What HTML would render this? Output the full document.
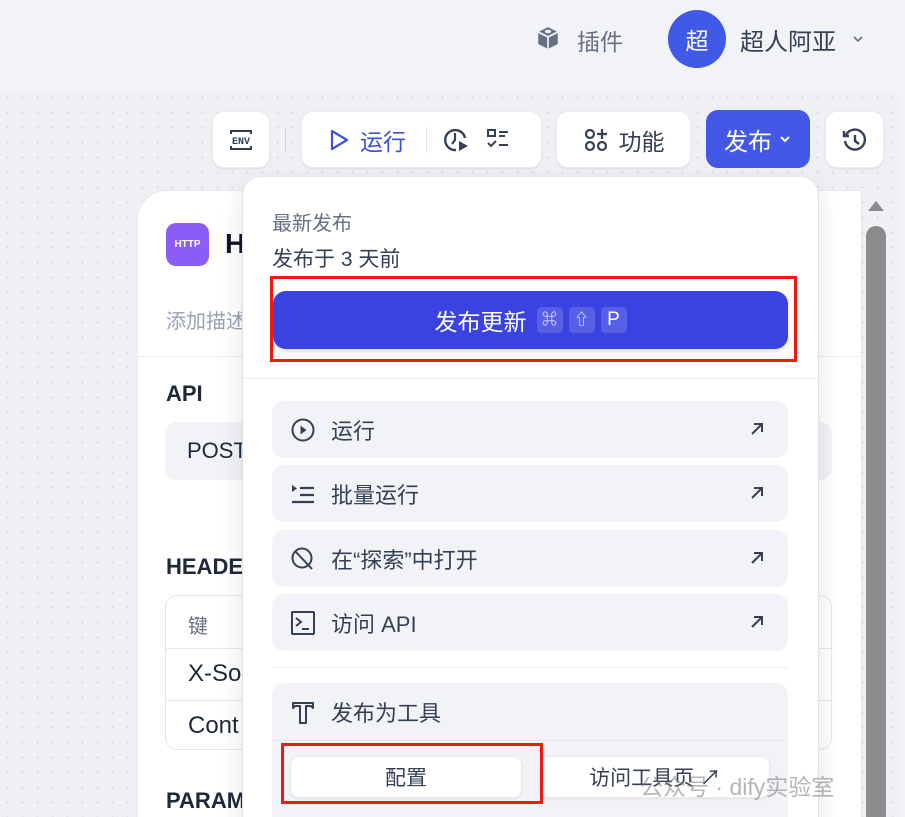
<!DOCTYPE html>
<html style="width:905px;height:817px;overflow:hidden"><head><meta charset="utf-8"><style>
*{box-sizing:border-box;margin:0;padding:0}
body{width:905px;height:817px;overflow:hidden;position:relative;background:#f2f3f7;font-family:"Liberation Sans","Noto Sans CJK SC",sans-serif;color:#1d2939}
.abs{position:absolute}
.canvas{left:0;top:90px;width:900px;height:727px;background-color:#eef0f4;background-image:radial-gradient(#d5d8df 1px,transparent 1.2px);background-size:15px 15px;border-top-right-radius:18px}
.btn{background:#fff;border-radius:12px;box-shadow:0 1px 2px rgba(16,24,40,.08);border:1px solid #eaecf0;display:flex;align-items:center;justify-content:center}
.panel{left:137px;top:190px;width:725px;height:640px;background:#fff;border-top-left-radius:30px;border:1px solid #e6e8ec}
.pop{left:243px;top:177px;width:575px;height:660px;background:#fff;border-radius:18px;box-shadow:0 8px 24px rgba(16,24,40,.12),0 0 0 1px #eceef2}
.item{left:29px;width:516px;height:57px;background:#f2f3f7;border-radius:12px;display:flex;align-items:center;padding-left:18px;font-size:22px;color:#344054}
.item svg.ic{margin-right:15px}
.arr{position:absolute;right:22px;top:19px;margin:0}
.kbd{display:inline-block;background:rgba(255,255,255,.15);border-radius:5px;height:26px;min-width:26px;font-size:15px;line-height:26px;text-align:center;margin-left:6px;padding:0 5px;vertical-align:middle}
</style></head><body>
<!-- header -->
<svg class="abs" style="left:535px;top:25px" width="26" height="26" viewBox="0 0 24 24"><path d="M12 2l9 4.5v11L12 22 3 17.5v-11z" fill="#667085"/><path d="M3 6.5L12 11l9-4.5M12 11v11" stroke="#f2f3f7" stroke-width="1.6" fill="none"/><ellipse cx="12" cy="6" rx="3" ry="1.6" fill="#f2f3f7"/></svg>
<div class="abs" style="left:577px;top:23px;font-size:23px;color:#667085">插件</div>
<div class="abs" style="left:668px;top:10px;width:58px;height:58px;border-radius:50%;background:#4159e7;color:#fff;font-size:23px;display:flex;align-items:center;justify-content:center">超</div>
<div class="abs" style="left:740px;top:22px;font-size:24px;color:#344054">超人阿亚</div>
<svg class="abs" style="left:851px;top:32px" width="14" height="14" viewBox="0 0 14 14"><path d="M3 5l4 4 4-4" stroke="#667085" stroke-width="1.6" fill="none"/></svg>

<div class="abs canvas"></div>

<!-- toolbar -->
<div class="abs btn" style="left:212px;top:111px;width:58px;height:57px"><svg width="28" height="26" viewBox="0 0 28 26"><path d="M4 7V4h20v3M4 19v3h20v-3" stroke="#344054" stroke-width="2" fill="none"/><text x="14" y="17" font-size="10" font-weight="bold" fill="#344054" text-anchor="middle" font-family="Liberation Mono">ENV</text></svg></div>
<div class="abs" style="left:285px;top:127px;width:1px;height:26px;background:#d0d5dd"></div>
<div class="abs btn" style="left:301px;top:111px;width:241px;height:57px;justify-content:flex-start;padding-left:26px">
<svg width="22" height="24" viewBox="0 0 22 24"><path d="M4 3l15 9-15 9z" stroke="#3d50e0" stroke-width="2.2" fill="none" stroke-linejoin="round"/></svg>
<span style="color:#3d50e0;font-size:23px;margin-left:10px">运行</span>
<div style="width:1px;height:26px;background:#e4e7ec;margin-left:20px"></div>
<svg style="margin-left:14px" width="30" height="30" viewBox="0 0 30 30"><path d="M24 13A10 10 0 1 0 15 25" stroke="#344054" stroke-width="2.4" fill="none"/><path d="M14 8v7l-3 4" stroke="#344054" stroke-width="2.2" fill="none"/><path d="M18 16l9 5-9 5z" fill="#344054"/></svg>
<svg style="margin-left:14px" width="26" height="26" viewBox="0 0 26 26"><rect x="3" y="3" width="7" height="6" stroke="#344054" stroke-width="2" fill="none"/><path d="M14 5h9M14 9h6M3 16l3 3 5-5M14 18h9" stroke="#344054" stroke-width="2" fill="none"/></svg>
</div>
<div class="abs btn" style="left:556px;top:111px;width:135px;height:57px"><svg width="26" height="26" viewBox="0 0 26 26"><circle cx="7" cy="7" r="4" stroke="#344054" stroke-width="2.2" fill="none"/><circle cx="7" cy="19" r="4" stroke="#344054" stroke-width="2.2" fill="none"/><circle cx="19" cy="19" r="4" stroke="#344054" stroke-width="2.2" fill="none"/><path d="M19 2v10M14 7h10" stroke="#344054" stroke-width="2.2"/></svg><span style="font-size:23px;margin-left:10px;color:#344054">功能</span></div>
<div class="abs" style="left:706px;top:110px;width:104px;height:58px;border-radius:12px;background:#4358e6;color:#fff;font-size:24px;display:flex;align-items:center;justify-content:center">发布<svg style="margin-left:6px" width="14" height="14" viewBox="0 0 14 14"><path d="M3 5l4 4 4-4" stroke="#fff" stroke-width="2" fill="none"/></svg></div>
<div class="abs btn" style="left:825px;top:111px;width:59px;height:57px"><svg width="28" height="28" viewBox="0 0 28 28"><path d="M5 9A10 10 0 1 1 4 15" stroke="#344054" stroke-width="2.4" fill="none"/><path d="M3 5v5h5" stroke="#344054" stroke-width="2.4" fill="none"/><path d="M14 9v6l4 3" stroke="#344054" stroke-width="2.4" fill="none"/></svg></div>

<!-- panel -->
<div class="abs panel"></div>
<div class="abs" style="left:166px;top:223px;width:43px;height:43px;border-radius:10px;background:#8b5cf6;color:#fff;font-size:10px;font-weight:bold;line-height:43px;text-align:center">HTTP</div>
<div class="abs" style="left:225px;top:228px;font-size:28px;font-weight:bold;color:#101828">H</div>
<div class="abs" style="left:166px;top:305px;font-size:20px;color:#98a2b3">添加描述</div>
<div class="abs" style="left:137px;top:356px;width:725px;height:1px;background:#eaecf0"></div>
<div class="abs" style="left:166px;top:381px;font-size:22px;font-weight:bold">API</div>
<div class="abs" style="left:165px;top:422px;width:667px;height:58px;background:#f2f3f7;border-radius:12px;padding:16px 22px;font-size:22px">POST</div>
<div class="abs" style="left:166px;top:554px;font-size:22px;font-weight:bold">HEADERS</div>
<div class="abs" style="left:165px;top:595px;width:667px;height:155px;border:1px solid #e4e7ec;border-radius:12px"></div>
<div class="abs" style="left:165px;top:648px;width:667px;height:1px;background:#e4e7ec"></div>
<div class="abs" style="left:165px;top:700px;width:667px;height:1px;background:#e4e7ec"></div>
<div class="abs" style="left:188px;top:610px;font-size:20px;color:#667085">键</div>
<div class="abs" style="left:188px;top:660px;font-size:24px">X-So</div>
<div class="abs" style="left:188px;top:712px;font-size:24px">Cont</div>
<div class="abs" style="left:166px;top:788px;font-size:22px;font-weight:bold">PARAMS</div>

<!-- scrollbar -->
<svg class="abs" style="left:866px;top:199px" width="20" height="14"><path d="M10 2l8 10H2z" fill="#8c8c8c"/></svg>
<div class="abs" style="left:866px;top:226px;width:20px;height:600px;background:#8c8c8c;border-radius:10px"></div>

<!-- popup -->
<div class="abs pop">
<div class="abs" style="left:29px;top:30px;font-size:20px;color:#667085">最新发布</div>
<div class="abs" style="left:29px;top:66px;font-size:21px;color:#344054">发布于 3 天前</div>
<div class="abs" style="left:30px;top:114px;width:515px;height:58px;border-radius:13px;background:#3a43e2;color:#fff;font-size:23px;display:flex;align-items:center;justify-content:center;box-shadow:0 2px 4px rgba(0,0,0,.15)">发布更新<span class="kbd" style="margin-left:10px">⌘</span><span class="kbd">⇧</span><span class="kbd" style="font-size:19px">P</span></div>
<div class="abs" style="left:0;top:201px;width:575px;height:1px;background:#eaecf0"></div>
<div class="abs item" style="top:224px"><svg class="ic" width="26" height="26" viewBox="0 0 26 26"><circle cx="13" cy="13" r="10.5" stroke="#344054" stroke-width="2" fill="none"/><path d="M10.5 8.5l6 4.5-6 4.5z" fill="#344054"/></svg>运行<svg class="arr" width="18" height="18" viewBox="0 0 18 18"><path d="M4 14L14 4M6 4h8v8" stroke="#344054" stroke-width="2" fill="none"/></svg></div>
<div class="abs item" style="top:288px"><svg class="ic" width="26" height="26" viewBox="0 0 26 26"><path d="M2 4l5 3.5L2 11z" fill="#344054"/><path d="M10 7h14M10 14h14M2 21h22" stroke="#344054" stroke-width="2.2"/></svg>批量运行<svg class="arr" width="18" height="18" viewBox="0 0 18 18"><path d="M4 14L14 4M6 4h8v8" stroke="#344054" stroke-width="2" fill="none"/></svg></div>
<div class="abs item" style="top:353px"><svg class="ic" width="26" height="26" viewBox="0 0 26 26"><circle cx="12" cy="12" r="9.5" stroke="#344054" stroke-width="2" fill="none"/><path d="M5 5l17 18" stroke="#344054" stroke-width="2"/></svg>在“探索”中打开<svg class="arr" width="18" height="18" viewBox="0 0 18 18"><path d="M4 14L14 4M6 4h8v8" stroke="#344054" stroke-width="2" fill="none"/></svg></div>
<div class="abs item" style="top:417px"><svg class="ic" width="26" height="26" viewBox="0 0 26 26"><rect x="2" y="2" width="22" height="22" rx="1" stroke="#344054" stroke-width="2" fill="none"/><path d="M6 8l5 4-5 4M12 19h7" stroke="#344054" stroke-width="2" fill="none"/></svg>访问 API<svg class="arr" width="18" height="18" viewBox="0 0 18 18"><path d="M4 14L14 4M6 4h8v8" stroke="#344054" stroke-width="2" fill="none"/></svg></div>
<div class="abs" style="left:29px;top:490px;width:516px;height:1px;background:#eaecf0"></div>
<div class="abs" style="left:29px;top:506px;width:516px;height:160px;background:#f2f3f7;border-radius:12px"></div>
<div class="abs" style="left:29px;top:563px;width:516px;height:1px;background:#e4e7ec"></div>
<div class="abs item" style="top:506px;background:none"><svg class="ic" width="26" height="26" viewBox="0 0 26 26"><path d="M3 4h20v5l-2-2h-5v17h-6V7H5L3 9z" stroke="#344054" stroke-width="2" fill="none" stroke-linejoin="round"/></svg>发布为工具</div>
<div class="abs btn" style="left:47px;top:579px;width:232px;height:42px;border-radius:9px;font-size:21px;color:#344054">配置</div>
<div class="abs btn" style="left:297px;top:579px;width:230px;height:42px;border-radius:9px;font-size:21px;color:#344054">访问工具页 ↗</div>
</div>

<!-- red boxes -->
<div class="abs" style="left:270px;top:276px;width:527px;height:86px;border:3px solid #f01a12"></div>
<div class="abs" style="left:281px;top:743px;width:262px;height:61px;border:3px solid #f01a12"></div>
<div class="abs" style="left:640px;top:768px;font-size:23px;color:rgba(120,120,120,.55)">公众号 · dify实验室</div>
</body></html>
